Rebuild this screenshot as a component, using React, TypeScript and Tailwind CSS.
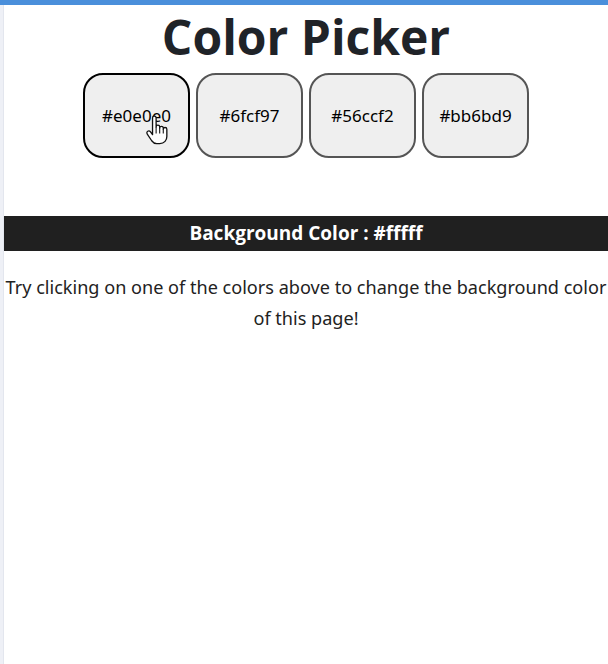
import { useState } from 'react';

const colors = ['#e0e0e0', '#6fcf97', '#56ccf2', '#bb6bd9'];

function HandCursor() {
  return (
    <svg className="absolute left-[60px] top-[40px] pointer-events-none" width="27" height="31" viewBox="0 0 22 26">
      <path
        d="M6 2.5c0-1 .7-1.5 1.5-1.5S9 1.5 9 2.5V10c0-1 .7-1.5 1.5-1.5S12 9 12 10v1c0-1 .7-1.5 1.5-1.5S15 10 15 11v1c0-1 .7-1.5 1.5-1.5S18 11 18 12v6c0 3-2 6-6 6H9.5c-2 0-3.2-1-4.2-2.4L1.6 16c-.6-.9-.4-1.9.4-2.4.8-.5 1.7-.2 2.3.6L6 16.5z"
        fill="#fff"
        stroke="#111"
        strokeWidth="1.1"
        strokeLinejoin="round"
      />
      <path d="M9 10v5.5M12 11v4.5M15 12v3.5" stroke="#111" strokeWidth="0.9" />
    </svg>
  );
}

export default function App() {
  const [bg, setBg] = useState('#fffff');

  return (
    <div className="min-h-[664px] bg-white border-t-[5px] border-t-[#4a8fdb] flex" style={{ fontFamily: '"Open Sans", sans-serif' }}>
      <div className="w-[4px] bg-[#eef0f6] border-r border-r-[#e3e6ee] shrink-0" />
      <div className="flex-1 flex flex-col items-center text-[#222]">
        <h1 className="text-[48px] font-bold leading-none mt-[8px] text-[#1f2328]">Color Picker</h1>
        <div className="flex gap-[6px] mt-[12px]">
          {colors.map((c, i) => (
            <button
              key={c}
              onClick={() => setBg(c)}
              className={
                'relative w-[107px] h-[85px] rounded-[20px] bg-[#efefef] text-[17px] text-black ' +
                (i === 0 ? 'border-2 border-black' : 'border-2 border-[#555]')
              }
              style={{ fontFamily: '"Noto Sans", sans-serif' }}
            >
              {c}
              {i === 0 && <HandCursor />}
            </button>
          ))}
        </div>
        <div className="w-full bg-[#202020] text-white font-bold text-[19px] h-[35px] flex items-center justify-center mt-[58px]">
          Background Color : {bg}
        </div>
        <p className="text-[18.1px] leading-[31px] text-center mt-[21px] text-[#222]" style={{ fontFamily: '"Noto Sans", sans-serif' }}>
          Try clicking on one of the colors above to change the background color of this page!
        </p>
      </div>
    </div>
  );
}
